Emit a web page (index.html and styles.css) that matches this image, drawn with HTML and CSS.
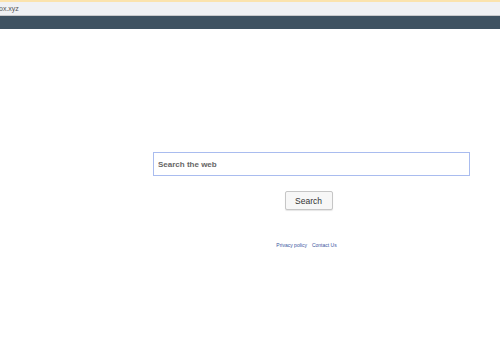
FILE: index.html
```html
<!DOCTYPE html>
<html lang="en">
<head>
    <meta charset="UTF-8">
    <meta name="viewport" content="width=device-width, initial-scale=1.0">
    <title>Search</title>
    <link rel="stylesheet" href="styles.css">
</head>
<body>

<!-- Browser chrome -->
<div class="top-line"></div>
<div class="address-bar">
    <span class="url">ox.xyz</span>
</div>
<div class="nav-bar"></div>

<!-- Search area -->
<div class="container">
    <form class="search-form" onsubmit="return false;">
        <input type="text" class="search-input" placeholder="Search the web">
        <button class="search-btn">Search</button>
    </form>

    <div class="footer-links">
        <a href="#">Privacy policy</a>
        <a href="#">Contact Us</a>
    </div>
</div>

</body>
</html>
```

FILE: styles.css
```css
/* Styles for the search page */
body {
    font-family: "Liberation Sans", Arial, sans-serif;
    margin: 0;
    padding: 0;
    background-color: #fff;
}
.top-line {
    height: 2px;
    background-color: #fbe3ad;
}
.address-bar {
    height: 13px;
    background-color: #f0f1f3;
    border-bottom: 1px solid #c9cacc;
    display: flex;
    align-items: center;
}
.url {
    font-size: 7px;
    color: #555;
    margin-left: -1px;
}
.nav-bar {
    height: 13px;
    background-color: #3f5261;
}
.container {
    padding-left: 153px;
    width: 317px;
}
.search-form {
    display: flex;
    flex-direction: column;
    align-items: center;
    margin-top: 123px;
}
.search-input {
    box-sizing: border-box;
    width: 317px;
    height: 24px;
    padding: 0 4px;
    border: 1px solid #a9bcef;
    font-family: "Liberation Sans", Arial, sans-serif;
    font-size: 8px;
    font-weight: bold;
    outline: none;
}
.search-input::placeholder {
    color: #666;
}
.search-btn {
    margin-top: 15px;
    margin-right: 6px;
    width: 48px;
    height: 19px;
    padding: 0;
    background-color: #f7f7f7;
    border: 1px solid #c6c6c6;
    border-radius: 2px;
    box-shadow: 0 1px 1px rgba(0, 0, 0, 0.1);
    font-family: "Liberation Sans", Arial, sans-serif;
    font-size: 8.5px;
    color: #333;
    cursor: pointer;
}
.footer-links {
    display: flex;
    justify-content: center;
    gap: 5px;
    margin-top: 32px;
    padding-right: 10px;
}
.footer-links a {
    font-size: 5px;
    color: #3a55a0;
    text-decoration: none;
}
```
